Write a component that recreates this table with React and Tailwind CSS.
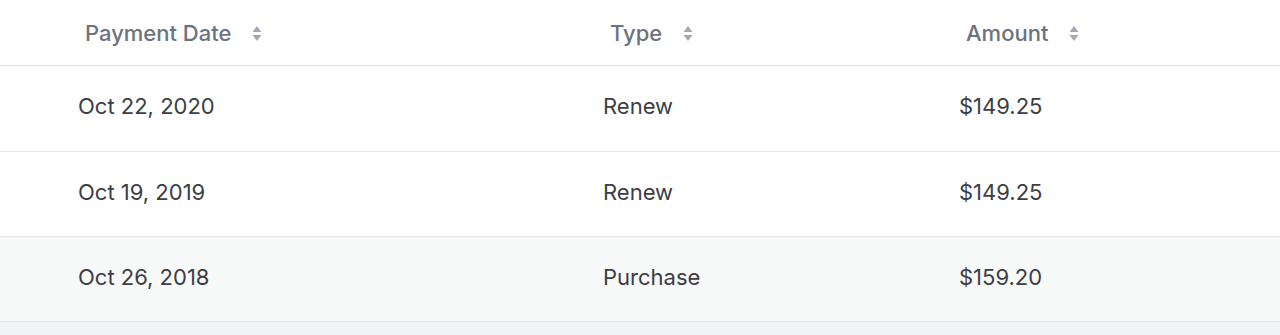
import React from "react";

function SortIcon() {
  return (
    <svg width="10" height="17" viewBox="0 0 10 17" className="ml-[21px] shrink-0">
      <path d="M5 1 L9.5 7 L0.5 7 Z" fill="#a3a9b3" />
      <path d="M5 16 L9.5 10 L0.5 10 Z" fill="#a3a9b3" />
    </svg>
  );
}

const rows = [
  { date: "Oct 22, 2020", type: "Renew", amount: "$149.25", cls: "h-[86px] bg-white" },
  { date: "Oct 19, 2019", type: "Renew", amount: "$149.25", cls: "h-[85px] bg-white" },
  { date: "Oct 26, 2018", type: "Purchase", amount: "$159.20", cls: "h-[85px] bg-[#f8f9f9]" },
];

export default function App() {
  return (
    <div
      className="w-[1280px] h-[335px] bg-[#f2f3f6] overflow-hidden"
      style={{ fontFamily: "Inter, 'Liberation Sans', sans-serif" }}
    >
      <div className="grid grid-cols-[525px_356px_1fr] pl-[85px] h-[66px] pt-[2px] items-center bg-white text-[22px] font-medium text-[#6b7280] border-b border-[#dfe2e6]">
        <div className="flex items-center">Payment Date<SortIcon /></div>
        <div className="flex items-center">Type<SortIcon /></div>
        <div className="flex items-center">Amount<SortIcon /></div>
      </div>
      {rows.map((r, i) => (
        <div
          key={i}
          className={`grid grid-cols-[525px_356px_1fr] pl-[78px] pb-[4px] items-center text-[22px] text-[#3b3e44] border-b border-[#e2e4e7] ${r.cls}`}
        >
          <div>{r.date}</div>
          <div>{r.type}</div>
          <div>{r.amount}</div>
        </div>
      ))}
    </div>
  );
}
